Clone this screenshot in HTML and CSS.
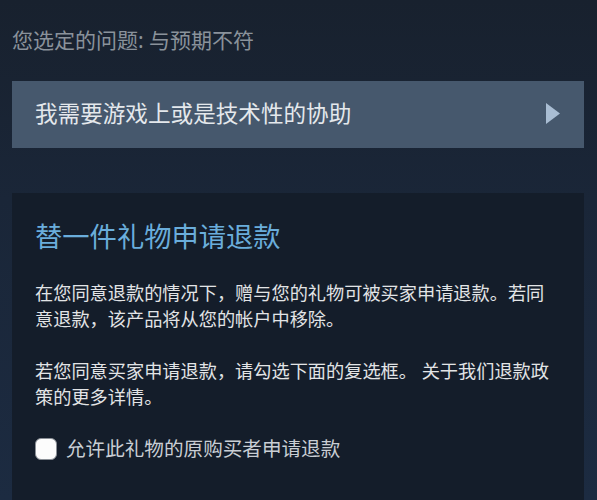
FILE: index.html
```html
<!DOCTYPE html>
<html lang="zh-CN">
<head>
<meta charset="utf-8">
<link rel="stylesheet" href="styles.css">
</head>
<body>
<div class="page">
  <div class="issue">您选定的问题: 与预期不符</div>
  <div class="option">
    <span class="option-text">我需要游戏上或是技术性的协助</span>
    <svg class="arrow" width="14" height="21" viewBox="0 0 14 21"><polygon points="0,0 14,10.5 0,21" fill="#a9bdd3"/></svg>
  </div>
  <div class="panel">
    <h2 class="title">替一件礼物申请退款</h2>
    <p class="para">在您同意退款的情况下，赠与您的礼物可被买家申请退款。若同意退款，该产品将从您的帐户中移除。</p>
    <p class="para">若您同意买家申请退款，请勾选下面的复选框。 关于我们退款政策的更多详情。</p>
    <label class="check">
      <span class="box"></span>
      <span class="check-text">允许此礼物的原购买者申请退款</span>
    </label>
  </div>
</div>
</body>
</html>
```

FILE: styles.css
```css
html, body {
  margin: 0;
  padding: 0;
  height: 100%;
}
body {
  background: linear-gradient(180deg, #18212e 0%, #1a2638 40%, #1c2b41 100%);
  font-family: "Noto Sans", "Noto Sans CJK SC", sans-serif;
  overflow: hidden;
}
.page {
  padding: 0 13px 0 12px;
}
.issue {
  padding-top: 25px;
  height: 81px;
  box-sizing: border-box;
  font-size: 21px;
  line-height: 30px;
  color: #8a929b;
}
.option {
  height: 67px;
  background: #46586d;
  display: flex;
  align-items: center;
  justify-content: space-between;
  padding: 0 23px;
  margin-bottom: 45px;
}
.option-text {
  font-size: 22.6px;
  color: #e4e8ec;
  line-height: 30px;
  margin-top: -1px;
}
.arrow {
  margin-right: 1px;
  margin-top: -3px;
}
.panel {
  background: #141d2a;
  padding: 27px 30px 60px 23px;
  min-height: 400px;
}
.title {
  margin: 0 0 26px;
  font-size: 27.3px;
  font-weight: normal;
  line-height: 34px;
  color: #6aaddb;
}
.para {
  margin: 0 0 26px;
  font-size: 18.2px;
  line-height: 26px;
  color: #e2e4e6;
}
.check {
  display: flex;
  align-items: center;
  gap: 9px;
  margin-top: 24px;
}
.box {
  width: 20px;
  height: 20px;
  background: #fcfcfc;
  border: 1px solid #8a8f96;
  border-radius: 6px;
  flex: none;
}
.check-text {
  font-size: 19.6px;
  line-height: 26px;
  color: #c9ced4;
}
```
